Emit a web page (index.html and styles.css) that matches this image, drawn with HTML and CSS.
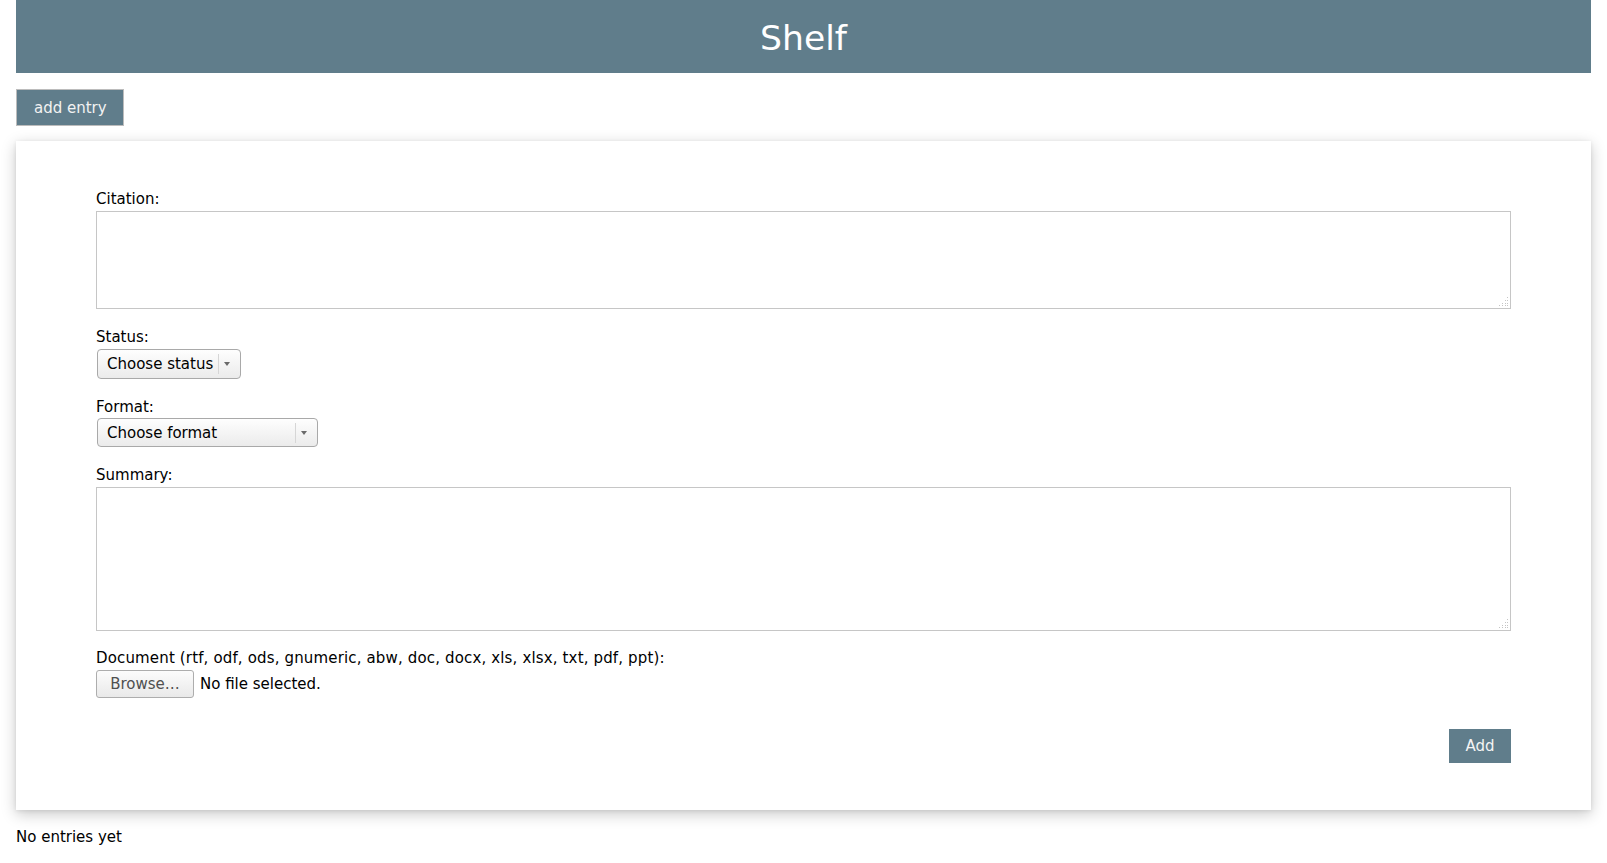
FILE: index.html
```html
<!DOCTYPE html>
<html lang="en">
<head>
<meta charset="utf-8">
<title>Shelf</title>
<link rel="stylesheet" href="styles.css">
</head>
<body>
<header class="banner"><h1 class="banner-title">Shelf</h1></header>
<div class="toolbar"><button class="add-entry" type="button">add entry</button></div>
<form class="card">
  <div class="field">
    <label class="field-label" for="citation">Citation:</label>
    <div class="area-wrap">
      <textarea id="citation" class="area area-citation"></textarea>
      <svg class="grip" width="10" height="10" viewBox="0 0 10 10"><g fill="#c4c4c4"><rect x="8" y="0" width="1" height="1"/><rect x="6" y="3" width="1" height="1"/><rect x="8" y="3" width="1" height="1"/><rect x="3" y="6" width="1" height="1"/><rect x="6" y="6" width="1" height="1"/><rect x="8" y="6" width="1" height="1"/><rect x="0" y="8" width="1" height="1"/><rect x="3" y="8" width="1" height="1"/><rect x="6" y="8" width="1" height="1"/><rect x="8" y="8" width="1" height="1"/></g></svg>
    </div>
  </div>
  <div class="field">
    <div class="field-label">Status:</div>
    <div class="select select-status"><span class="select-text">Choose status</span><span class="select-divider"></span><span class="select-arrow"></span></div>
  </div>
  <div class="field field-format">
    <div class="field-label">Format:</div>
    <div class="select select-format"><span class="select-text">Choose format</span><span class="select-divider"></span><span class="select-arrow"></span></div>
  </div>
  <div class="field field-summary">
    <label class="field-label" for="summary">Summary:</label>
    <div class="area-wrap">
      <textarea id="summary" class="area area-summary"></textarea>
      <svg class="grip" width="10" height="10" viewBox="0 0 10 10"><g fill="#c4c4c4"><rect x="8" y="0" width="1" height="1"/><rect x="6" y="3" width="1" height="1"/><rect x="8" y="3" width="1" height="1"/><rect x="3" y="6" width="1" height="1"/><rect x="6" y="6" width="1" height="1"/><rect x="8" y="6" width="1" height="1"/><rect x="0" y="8" width="1" height="1"/><rect x="3" y="8" width="1" height="1"/><rect x="6" y="8" width="1" height="1"/><rect x="8" y="8" width="1" height="1"/></g></svg>
    </div>
  </div>
  <div class="field field-doc">
    <div class="field-label doc-label">Document (rtf, odf, ods, gnumeric, abw, doc, docx, xls, xlsx, txt, pdf, ppt):</div>
    <div class="file-row"><button class="browse" type="button">Browse…</button><span class="file-status">No file selected.</span></div>
  </div>
  <div class="actions"><button class="add" type="button">Add</button></div>
</form>
<p class="empty">No entries yet</p>
</body>
</html>
```
FILE: styles.css
```css
html, body {
  margin: 0;
  padding: 0;
  background: #ffffff;
}
body {
  padding: 0 16px;
  font-family: "DejaVu Sans", "Liberation Sans", sans-serif;
  font-size: 15px;
  line-height: 18px;
  color: #000;
}
.banner {
  box-sizing: border-box;
  height: 73px;
  padding-top: 2px;
  background: #607d8b;
  display: flex;
  align-items: center;
  justify-content: center;
}
.banner-title {
  margin: 0;
  font-size: 34.6px;
  font-weight: normal;
  line-height: 40px;
  color: #ffffff;
}
.toolbar {
  margin-top: 16px;
  display: flex;
}
.add-entry {
  height: 37px;
  padding: 0 16px 0 17px;
  border: 1px solid #bcbcbc;
  background: #607d8b;
  color: #f2f2f2;
  font-family: inherit;
  font-size: 15px;
  line-height: 18px;
}
.card {
  margin: 15px 0 0;
  background: #ffffff;
  padding: 48px 80px 47px;
  box-shadow: 0 4px 14px rgba(0, 0, 0, 0.22), 0 1px 4px rgba(0, 0, 0, 0.08);
  display: flex;
  flex-direction: column;
}
.field {
  display: flex;
  flex-direction: column;
  align-items: flex-start;
  margin-bottom: 18px;
}
.field-summary {
  margin-bottom: 17px;
}
.field-doc {
  margin-bottom: 31px;
}
.field-label {
  display: block;
  line-height: 18px;
  padding-top: 1px;
  margin-bottom: 3px;
}
.field-format .field-label {
  margin-bottom: 2px;
}
.doc-label {
  letter-spacing: 0.15px;
}
.area-wrap {
  position: relative;
  align-self: stretch;
  display: flex;
}
.area {
  display: block;
  flex: 1;
  box-sizing: border-box;
  border: 1px solid #c6c6c6;
  margin: 0;
  padding: 2px;
  resize: none;
  font-family: inherit;
  font-size: 15px;
  background: #fff;
}
.area-citation { height: 98px; }
.area-summary { height: 144px; }
.grip {
  position: absolute;
  right: 2px;
  bottom: 2px;
}
.select {
  box-sizing: border-box;
  display: inline-flex;
  align-items: center;
  height: 30px;
  margin-left: 1px;
  padding-left: 9px;
  border: 1px solid #a9a9a9;
  border-radius: 4px;
  background: linear-gradient(#fefefe, #ebebeb);
  color: #000;
}
.select-status { width: 144px; }
.select-format { width: 221px; height: 29px; }
.select-text {
  flex: 1;
  white-space: nowrap;
}
.select-divider {
  width: 1px;
  height: 20px;
  background: #d6d6d6;
}
.select-arrow {
  width: 21px;
  height: 27px;
  display: flex;
  align-items: center;
  justify-content: center;
}
.select-arrow::before {
  content: "";
  margin-right: 6px;
  border-left: 3px solid transparent;
  border-right: 3px solid transparent;
  border-top: 4px solid #6a6a6a;
}
.file-row {
  display: flex;
  align-items: center;
}
.browse {
  box-sizing: border-box;
  width: 98px;
  height: 28px;
  margin: 0;
  padding: 0;
  border: 1px solid #adadad;
  border-radius: 3px;
  background: linear-gradient(#fcfcfc, #e9e9e9);
  color: #505050;
  font-family: inherit;
  font-size: 15px;
  line-height: 18px;
}
.file-status {
  margin-left: 6px;
}
.actions {
  display: flex;
  justify-content: flex-end;
}
.add {
  width: 62px;
  height: 34px;
  margin: 0;
  padding: 0;
  border: none;
  background: #607d8b;
  color: #f4f4f4;
  font-family: inherit;
  font-size: 15px;
  line-height: 18px;
}
.empty {
  margin: 18px 0 0;
  line-height: 18px;
}
```
